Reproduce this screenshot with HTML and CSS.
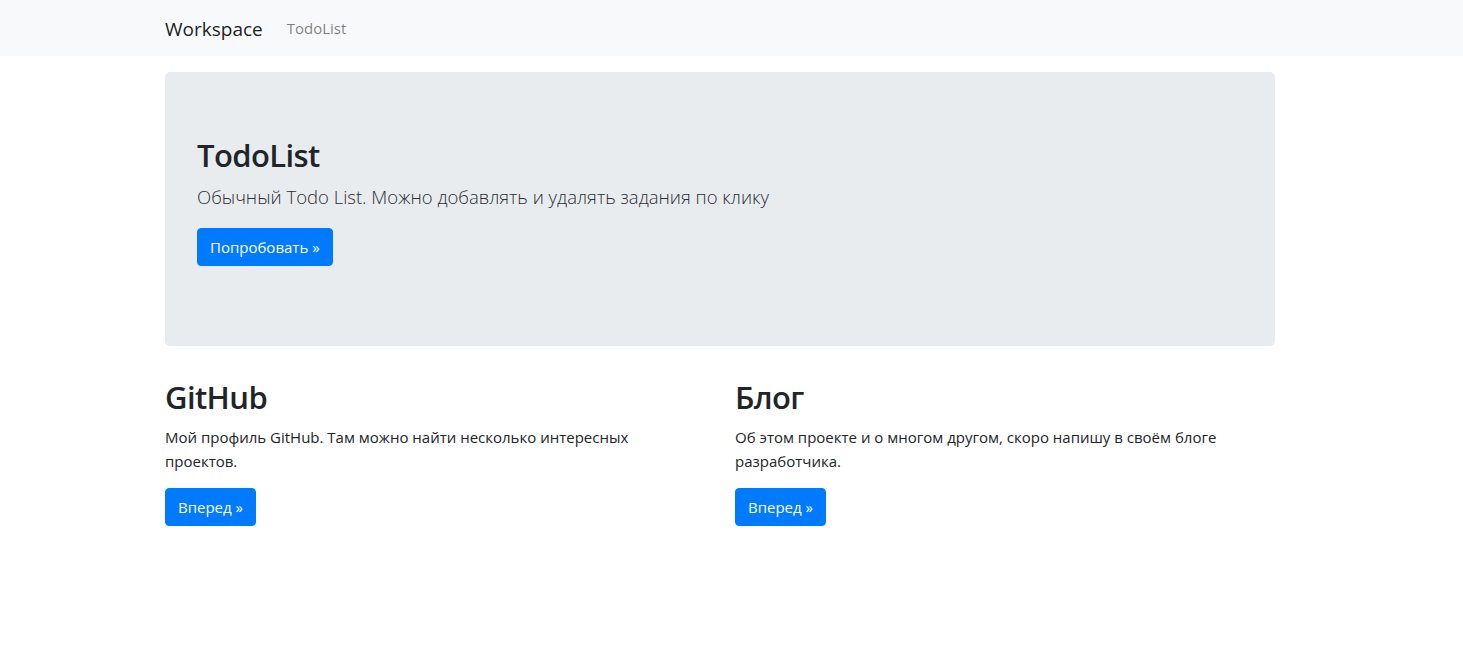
FILE: index.html
```html
<!DOCTYPE html>
<html lang="ru">
<head>
<meta charset="utf-8">
<title>Workspace</title>
<link rel="stylesheet" href="styles.css">
</head>
<body>
<nav class="navbar">
  <div class="nav-inner">
    <a class="brand" href="#">Workspace</a>
    <a class="nav-link" href="#">TodoList</a>
  </div>
</nav>
<main class="container">
  <section class="jumbotron">
    <h1 class="jumbo-title">TodoList</h1>
    <p class="lead">Обычный Todo List. Можно добавлять и удалять задания по клику</p>
    <p class="btn-wrap"><a class="btn" href="#">Попробовать »</a></p>
  </section>
  <div class="row">
    <div class="col">
      <h2 class="col-title">GitHub</h2>
      <p class="col-text">Мой профиль GitHub. Там можно найти несколько интересных проектов.</p>
      <p class="btn-wrap"><a class="btn" href="#">Вперед »</a></p>
    </div>
    <div class="col">
      <h2 class="col-title">Блог</h2>
      <p class="col-text">Об этом проекте и о многом другом, скоро напишу в своём блоге разработчика.</p>
      <p class="btn-wrap"><a class="btn" href="#">Вперед »</a></p>
    </div>
  </div>
</main>
</body>
</html>
```
FILE: styles.css
```css
* { box-sizing: border-box; }
body {
  margin: 0;
  font-family: "Open Sans", "Noto Sans", "Liberation Sans", sans-serif;
  font-size: 16px;
  line-height: 1.5;
  color: #212529;
  background: #fff;
}
a { text-decoration: none; }
.navbar {
  background: #f8f9fa;
  height: 56px;
  padding: 8px 0;
}
.nav-inner {
  width: 1110px;
  margin-left: 165px;
  display: flex;
  align-items: center;
  height: 40px;
}
.brand {
  font-size: 19px;
  line-height: 30px;
  color: rgba(0,0,0,.9);
  margin-right: 16px;
  padding-top: 2px;
}
.nav-link {
  padding: 8px;
  font-size: 15px;
  color: rgba(0,0,0,.5);
  padding-top: 8px;
}
.container {
  width: 1110px;
  margin-left: 165px;
  padding-top: 16px;
}
.jumbotron {
  background: #e9ecef;
  border-radius: 4.8px;
  padding: 64px 32px;
  margin-bottom: 32px;
}
.jumbo-title, .col-title {
  font-size: 31px;
  line-height: 38.4px;
  font-weight: 600;
  letter-spacing: -0.6px;
  margin: 0 0 8px;
}
.lead {
  font-size: 18.5px;
  line-height: 30px;
  font-weight: 300;
  color: #2b2f33;
  margin: 0 0 16px;
}
.btn-wrap { margin: 0 0 16px; }
.btn {
  display: inline-block;
  background: #007bff;
  color: #fff;
  border: 1px solid #007bff;
  border-radius: 4px;
  padding: 6px 12px;
  font-size: 15px;
  line-height: 24px;
}
.row {
  display: flex;
  gap: 30px;
}
.col { flex: 1 1 0; }
.col-text {
  margin: 0 0 15px;
  max-width: 520px;
  font-size: 15px;
  line-height: 24px;
}
```
